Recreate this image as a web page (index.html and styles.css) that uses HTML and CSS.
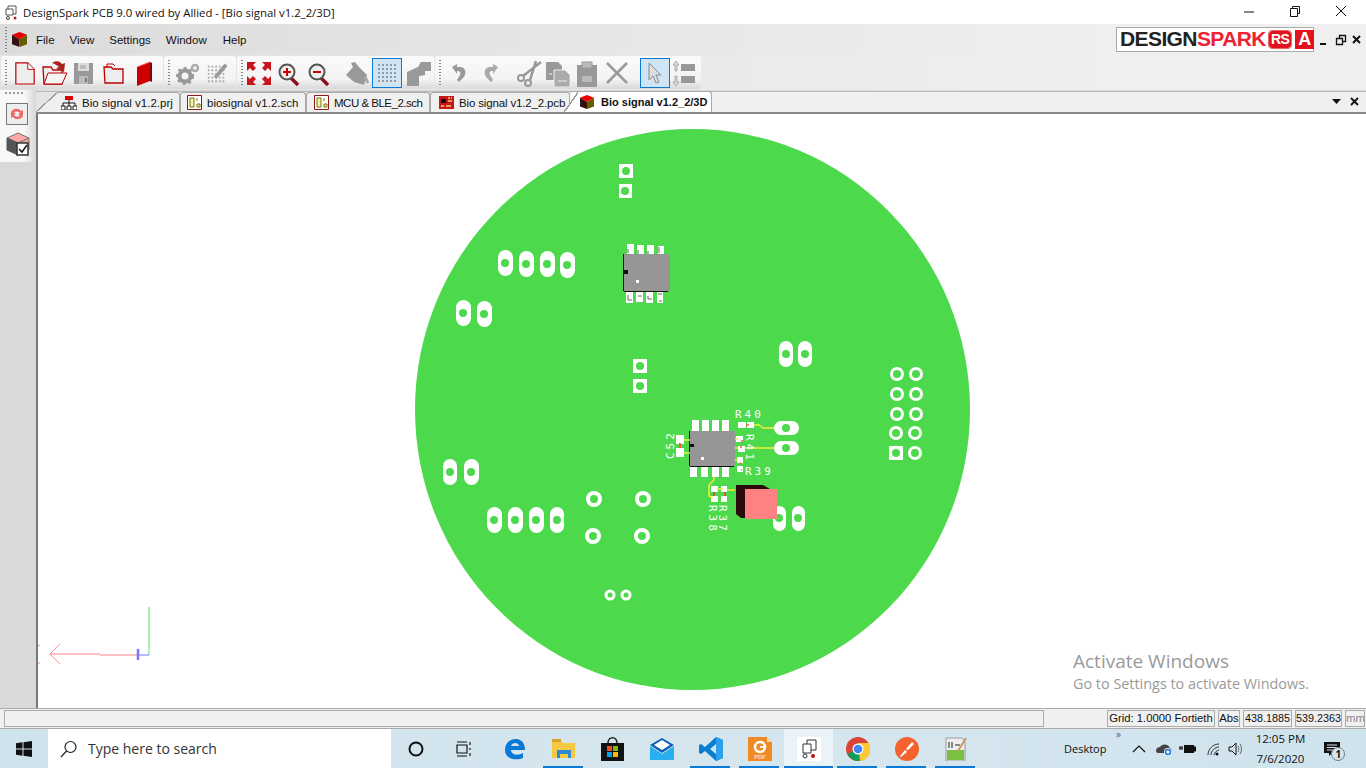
FILE: index.html
```html
<!DOCTYPE html>
<html lang="en">
<head>
  <meta charset="UTF-8">
  <title>DesignSpark PCB 9.0</title>
  <link rel="stylesheet" href="styles.css">
</head>
<body>
  <div class="titlebar">
    <svg class="app-icon" width="16" height="16" viewBox="0 0 16 16"><path d="M4 2h8v8H4z" fill="#fff" stroke="#555"/><path d="M2 5h7v6H2z" fill="#fff" stroke="#555"/><circle cx="4" cy="14" r="1.500" fill="#fff" stroke="#444"/><circle cx="11" cy="14" r="1.500" fill="#b22"/></svg>
    <span class="title-text">DesignSpark PCB 9.0 wired by Allied - [Bio signal v1.2_2/3D]</span>
    <div class="win-buttons">
      <svg width="46" height="22" viewBox="0 0 46 22"><path d="M18 11h10" stroke="#111"/></svg>
      <svg width="46" height="22" viewBox="0 0 46 22"><path d="M18.500 7.500h7v8h-7zM20.500 7.500v-2h7v7h-2" fill="none" stroke="#111"/></svg>
      <svg width="46" height="22" viewBox="0 0 46 22"><path d="M18 5l10 10M28 5L18 15" stroke="#111"/></svg>
    </div>
  </div>

  <div class="menubar">
    <span class="grip"></span>
    <svg class="cube" width="17" height="15" viewBox="0 0 18 16"><path d="M9 0l8 3-8 5-8-5z" fill="#e00"/><path d="M1 3l8 5v8l-8-3z" fill="#311"/><path d="M17 3L9 8v8l8-3z" fill="#665c00"/></svg>
    <span class="menu-item m-file">File</span>
    <span class="menu-item m-view">View</span>
    <span class="menu-item m-settings">Settings</span>
    <span class="menu-item m-window">Window</span>
    <span class="menu-item m-help">Help</span>
    <div class="logo-box">
      <span class="logo-black">DESIGN</span><span class="logo-red">SPARK</span><span class="logo-rs">RS</span><span class="logo-a">A</span>
    </div>
    <div class="mdi-buttons">
      <svg width="12" height="12" viewBox="0 0 12 12"><path d="M1 9h6v2H1z" fill="#111"/></svg>
      <svg width="12" height="12" viewBox="0 0 12 12"><path d="M1.500 4.500h6v6h-6zM4.500 4V1.500h6v6H8" fill="none" stroke="#111" stroke-width="1.300"/></svg>
      <svg width="12" height="12" viewBox="0 0 12 12"><path d="M2 2l7 7M9 2L2 9" stroke="#111" stroke-width="2"/></svg>
    </div>
  </div>

  <div class="toolrow">
    <div class="toolbar tb-file">
      <span class="grip"></span>
      <svg class="gap1" width="22" height="28" viewBox="0 0 24 28"><path d="M2 3h13l7 7v16H2z" fill="#eee" stroke="#b00" stroke-width="1.300"/><path d="M15 3v7h7" fill="#fff" stroke="#b00"/></svg>
      <svg class="gap6" width="26" height="28" viewBox="0 0 26 28"><path d="M2 25L1 8h8l2 3h9v14z" fill="#eee" stroke="#b00" stroke-width="1.300"/><path d="M2 25l4-11h19l-5 11z" fill="#f4f4f4" stroke="#b00"/><path d="M10 4c4-3 8-2 10 1l3-1-1 9-8-4 3-1c-2-2-4-3-7-4z" fill="#a22"/></svg>
      <svg class="gap5" width="22" height="28" viewBox="0 0 22 28"><path d="M1 4h19v21H1z" fill="#999"/><path d="M5 4h11v8H5z" fill="#ddd"/><path d="M7 7h6M7 9h6" stroke="#999"/><path d="M6 17h9v8H6z" fill="#bbb"/><path d="M12 19h2v4h-2z" fill="#777"/></svg>
      <svg class="gap8" width="22" height="28" viewBox="0 0 22 28"><path d="M2 24L1 8h7l2 2h10v14z" fill="#eee" stroke="#b00" stroke-width="1.300"/><path d="M4 9V5h6l2 2" fill="none" stroke="#b00"/></svg>
      <svg class="gap10" width="20" height="28" viewBox="0 0 20 28"><path d="M2 8l13-5v19L2 27z" fill="#c00"/><path d="M15 3l2 1v19l-2-1z" fill="#800"/><path d="M2 8l13-5" stroke="#e66"/></svg>
    </div>
    <div class="toolbar tb-gear">
      <span class="grip"></span>
      <svg width="24" height="28" viewBox="0 0 24 28"><circle cx="9" cy="17" r="5.500" fill="none" stroke="#999" stroke-width="4"/><circle cx="9" cy="17" r="8" fill="none" stroke="#999" stroke-width="2" stroke-dasharray="3 3"/><circle cx="19" cy="9" r="3" fill="none" stroke="#aaa" stroke-width="2.500"/></svg>
      <svg class="gap6" width="22" height="28" viewBox="0 0 24 28"><path d="M2 7h20M2 11h20M2 15h20M2 19h20M2 23h20" stroke="#aaa" stroke-width="2" stroke-dasharray="2 2"/><path d="M10 19L22 5" stroke="#999" stroke-width="4"/></svg>
    </div>
    <div class="toolbar tb-view">
      <span class="grip"></span>
      <svg width="24" height="28" viewBox="0 0 24 28"><path d="M0 3h9L6 6l3 3-3 3-3-3-3 3zM24 3h-9l3 3-3 3 3 3 3-3 3 3zM0 26h9l-3-3 3-3-3-3-3 3-3-3zM24 26h-9l3-3-3-3 3-3 3 3 3-3z" fill="#c8141c"/></svg>
      <svg class="gap6" width="24" height="28" viewBox="0 0 24 28"><path d="M14 19l7 7" stroke="#8a1020" stroke-width="3.500"/><circle cx="10" cy="13" r="7.500" fill="#eee" stroke="#555" stroke-width="2"/><path d="M6 13h8M10 9v8" stroke="#c00" stroke-width="2"/></svg>
      <svg class="gap6" width="24" height="28" viewBox="0 0 24 28"><path d="M14 19l7 7" stroke="#8a1020" stroke-width="3.500"/><circle cx="10" cy="13" r="7.500" fill="#eee" stroke="#555" stroke-width="2"/><path d="M6 13h8" stroke="#c00" stroke-width="2"/></svg>
      <svg class="gap14" width="26" height="28" viewBox="0 0 26 28"><path d="M8 8l-2-4 4-1 3 4 9 9-3 10-10-3-8-7z" fill="#999"/><path d="M20 18l3 6" stroke="#aaa" stroke-width="3"/></svg>
      <span class="tool-on tool-grid">
        <svg width="22" height="22" viewBox="0 0 22 22"><path d="M2 3h19M2 7h19M2 11h19M2 15h19M2 19h19" stroke="#999" stroke-width="2" stroke-dasharray="2 2"/></svg>
      </span>
      <svg class="gap4" width="26" height="28" viewBox="0 0 26 28"><path d="M1 13l11-5 3-5h10v9h-6v4l-6 1v10H1z" fill="#999"/></svg>
    </div>
    <div class="toolbar tb-edit">
      <span class="grip"></span>
      <svg class="gap2" width="22" height="28" viewBox="0 0 22 28"><path d="M3 8l5-3v3h3c6 0 7 7 3 11l-4 4-2-2 3-5c1-2 0-4-2-4H8v3z" fill="#999"/></svg>
      <svg class="gap9" width="20" height="28" viewBox="0 0 20 28"><path d="M18 8l-5-3v3h-3c-6 0-7 7-3 11l4 4 2-2-3-5c-1-2 0-4 2-4h1v3z" fill="#aaa"/></svg>
      <svg class="gap17" width="26" height="28" viewBox="0 0 26 28"><path d="M6 17L24 3M13 21L19 2" stroke="#999" stroke-width="2.500"/><circle cx="4" cy="19" r="3" fill="none" stroke="#999" stroke-width="2"/><circle cx="11" cy="24" r="3" fill="none" stroke="#999" stroke-width="2"/></svg>
      <svg class="gap2" width="26" height="28" viewBox="0 0 26 28"><path d="M1 3h12l4 4v14H1z" fill="#999"/><path d="M9 11h11l5 5v12H9z" fill="#aaa" stroke="#eee"/><path d="M4 15h3M13 22h9" stroke="#eee"/></svg>
      <svg class="gap4" width="24" height="28" viewBox="0 0 24 28"><path d="M2 6h20v22H2z" fill="#999"/><path d="M7 3h10v6H7z" fill="#bbb" stroke="#999"/><path d="M7 17h10v6H7z" fill="#bbb"/></svg>
      <svg class="gap6" width="24" height="28" viewBox="0 0 24 28"><path d="M2 4l20 20M22 4L2 24" stroke="#999" stroke-width="2.500"/></svg>
      <span class="tool-on tool-cursor">
        <svg width="18" height="24" viewBox="0 0 18 24"><path d="M3 2l12 12H10l3 7-3 1-3-7-4 4z" fill="#ddd" stroke="#888"/></svg>
      </span>
      <svg class="gap2" width="24" height="28" viewBox="0 0 24 28"><path d="M4 2l3 4H5v6H3V6H1zM4 27l3-4H5v-6H3v6H1z" fill="#ddd" stroke="#888" stroke-width=".6"/><path d="M9 5h14v7H9zM9 17h14v7H9z" fill="#999"/></svg>
    </div>
  </div>

  <div class="workspace">
    <div class="side-dock">
      <span class="side-grip"></span>
      <span class="side-btn"><svg width="18" height="18" viewBox="0 0 18 18"><path d="M3 8c0-4 7-6 10-2l2-1v5h-5l2-2c-2-2-5-2-6 0z" fill="#f06a6a"/><path d="M15 10c0 4-7 6-10 2l-2 1V8h5l-2 2c2 2 5 2 6 0z" fill="#f06a6a"/></svg></span>
      <svg class="side-cube" width="24" height="24" viewBox="0 0 24 24"><path d="M12 1l11 5-11 5L1 6z" fill="#ffa8a8" stroke="#777"/><path d="M1 6l11 5v12L1 18z" fill="#555" stroke="#555"/><path d="M23 6l-11 5v12l11-5z" fill="#f4a0a0" stroke="#777"/><path d="M11 11h11v12H11z" fill="#fff" stroke="#333" stroke-width="1.500"/><path d="M13 17l3 3 5-7" fill="none" stroke="#111" stroke-width="1.500"/></svg>
    </div>
    <div class="doc-area">
      <div class="tabs">
        <div class="tab tab-prj"><span class="slant slant-first"></span><svg width="16" height="14" viewBox="0 0 16 14"><path d="M4 0h8v4H4z" fill="#d00"/><path d="M8 4v3M2 10V7h12v3M8 7v3M0 10h4v4H0zM6 10h4v4H6zM12 10h4v4h-4z" fill="#fff" stroke="#111"/></svg>Bio signal v1.2.prj</div>
        <div class="tab tab-sch"><svg width="15" height="15" viewBox="0 0 15 15"><path d="M.5.500h14v14H.500z" fill="#fff" stroke="#8c1a1a"/><path d="M3 3h4v9H3zM10 3v3M10 9h3v3h-3z" fill="#f4eeb0" stroke="#7a7400"/></svg>biosignal v1.2.sch</div>
        <div class="tab tab-mcu"><svg width="15" height="15" viewBox="0 0 15 15"><path d="M.5.500h14v14H.500z" fill="#fff" stroke="#8c1a1a"/><path d="M3 3h4v9H3zM10 3v3M10 9h3v3h-3z" fill="#f4eeb0" stroke="#7a7400"/></svg><span class="mcu-name">MCU &amp; BLE_2.sch</span></div>
        <div class="tab tab-pcb"><svg width="15" height="13" viewBox="0 0 15 13"><path d="M0 0h15v13H0z" fill="#c8141c"/><path d="M2 3h5v4H2z" fill="#111"/><path d="M9 2h2M12 2h1M9 5h4M2 10h3M7 10h5" stroke="#f5d060" stroke-width="1.500"/></svg><span class="pcb-name">Bio signal v1.2_2.pcb</span></div>
        <div class="tab tab-3d"><span class="slant slant-active"></span><svg width="16" height="14" viewBox="0 0 18 16"><path d="M9 0l8 3-8 5-8-5z" fill="#e00"/><path d="M1 3l8 5v8l-8-3z" fill="#311"/><path d="M17 3L9 8v8l8-3z" fill="#665c00"/></svg>Bio signal v1.2_2/3D</div>
        <div class="tab-tools">
          <svg width="12" height="12" viewBox="0 0 12 12"><path d="M1 3h9L5.500 8z" fill="#111"/></svg>
          <svg width="12" height="12" viewBox="0 0 12 12"><path d="M2 2l7 7M9 2L2 9" stroke="#111" stroke-width="1.800"/></svg>
        </div>
      </div>
      <div class="canvas">
        <svg class="board" viewBox="38 114 1329 592" preserveAspectRatio="xMinYMin slice">
          <ellipse cx="692.500" cy="409.500" rx="277.500" ry="280.500" fill="#4cd94c"/>

          <g fill="#fff" class="pills">
            <rect x="498" y="250" width="15" height="26" rx="7.500"/><rect x="519" y="251" width="15" height="26" rx="7.500"/><rect x="540" y="251" width="15" height="26" rx="7.500"/><rect x="560" y="252" width="15" height="26" rx="7.500"/>
            <rect x="456" y="300" width="15" height="26" rx="7.500"/><rect x="477" y="301" width="15" height="26" rx="7.500"/>
            <rect x="779" y="341" width="14" height="26" rx="7"/><rect x="798" y="341" width="14" height="26" rx="7"/>
            <rect x="443" y="459" width="14" height="26" rx="7"/><rect x="464" y="459" width="15" height="26" rx="7.500"/>
            <rect x="487" y="507" width="15" height="26" rx="7.500"/><rect x="508" y="507" width="15" height="26" rx="7.500"/><rect x="529" y="507" width="15" height="26" rx="7.500"/><rect x="550" y="507" width="14" height="26" rx="7"/>
            <rect x="773" y="506" width="13" height="25" rx="6.500"/><rect x="792" y="506" width="13" height="25" rx="6.500"/>
            <rect x="774" y="421" width="25" height="14" rx="7"/><rect x="774" y="441" width="25" height="14" rx="7"/>
            <rect x="619" y="164" width="14" height="14"/><rect x="619" y="184" width="13" height="14"/><rect x="633" y="359" width="14" height="14"/><rect x="633" y="379" width="14" height="14"/><rect x="889" y="446" width="14" height="14"/>
            <circle cx="897" cy="374" r="7"/><circle cx="916" cy="374" r="7"/><circle cx="897" cy="394" r="7"/><circle cx="916" cy="394" r="7"/><circle cx="897" cy="414" r="7"/><circle cx="916" cy="414" r="7"/><circle cx="896" cy="433" r="7"/><circle cx="915" cy="433" r="7"/><circle cx="915" cy="453" r="7"/>
            <circle cx="594" cy="499" r="8"/><circle cx="643" cy="499" r="8"/><circle cx="593" cy="536" r="8"/><circle cx="642" cy="536" r="8"/><circle cx="610" cy="595" r="5.500"/><circle cx="626" cy="595" r="5.500"/>
          </g>
          <g fill="#4cd94c">
            <circle cx="505" cy="263" r="4"/><circle cx="526" cy="264" r="4"/><circle cx="547" cy="264" r="4"/><circle cx="567" cy="265" r="4"/>
            <circle cx="463" cy="313" r="4"/><circle cx="484" cy="314" r="4"/><circle cx="786" cy="354" r="4"/><circle cx="805" cy="354" r="4"/>
            <circle cx="450" cy="472" r="4"/><circle cx="471" cy="472" r="4"/><circle cx="494" cy="520" r="4"/><circle cx="515" cy="520" r="4"/><circle cx="536" cy="520" r="4"/><circle cx="557" cy="520" r="4"/>
            <circle cx="779" cy="518" r="4"/><circle cx="798" cy="518" r="4"/><circle cx="786" cy="428" r="4"/><circle cx="786" cy="448" r="4"/>
            <circle cx="626" cy="171" r="4"/><circle cx="625" cy="191" r="4"/><circle cx="640" cy="366" r="4"/><circle cx="640" cy="386" r="4"/><circle cx="896" cy="453" r="4"/>
            <circle cx="897" cy="374" r="4"/><circle cx="916" cy="374" r="4"/><circle cx="897" cy="394" r="4"/><circle cx="916" cy="394" r="4"/><circle cx="897" cy="414" r="4"/><circle cx="916" cy="414" r="4"/><circle cx="896" cy="433" r="4"/><circle cx="915" cy="433" r="4"/><circle cx="915" cy="453" r="4"/>
            <circle cx="594" cy="499" r="4"/><circle cx="643" cy="499" r="4"/><circle cx="593" cy="536" r="4"/><circle cx="642" cy="536" r="4"/><circle cx="610" cy="595" r="2.500"/><circle cx="626" cy="595" r="2.500"/>
          </g>

          <!-- top chip -->
          <g fill="#fff">
            <rect x="627" y="244" width="7" height="10"/><rect x="637" y="245" width="7" height="9"/><rect x="647" y="245" width="7" height="9"/><rect x="658" y="246" width="6" height="8"/>
            <rect x="626" y="290" width="7" height="13"/><rect x="636" y="290" width="7" height="12"/><rect x="646" y="290" width="7" height="13"/><rect x="657" y="290" width="6" height="13"/>
          </g>
          <path d="M628 249v4M638 250v4M648 251v3M659 247v6M628 295v5h4M638 296h4M648 296v3h4M658 294h4M659 301h3" stroke="#666" fill="none"/>
          <path d="M623 254h1v37h-1zM624 291h44v1h-44z" fill="#111"/>
          <rect x="624" y="254" width="46" height="37" fill="#969696"/>
          <rect x="624" y="270" width="4" height="4" fill="#111"/>
          <rect x="636" y="280" width="3" height="3" fill="#fff"/>

          <!-- lower chip -->
          <g fill="#fff">
            <rect x="692" y="420" width="7" height="11"/><rect x="702" y="420" width="7" height="11"/><rect x="712" y="420" width="7" height="11"/><rect x="722" y="420" width="7" height="11"/>
            <rect x="690" y="467" width="7" height="10"/><rect x="701" y="467" width="7" height="10"/><rect x="712" y="467" width="7" height="10"/><rect x="722" y="467" width="7" height="10"/>
            <rect x="676" y="435" width="8" height="9"/><rect x="676" y="448" width="8" height="9"/>
            <rect x="738" y="422" width="8" height="6"/><rect x="747" y="422" width="7" height="6"/>
            <rect x="736" y="436" width="7" height="6"/><rect x="738" y="446" width="7" height="6"/><rect x="737" y="457" width="6" height="6"/><rect x="737" y="466" width="6" height="6"/>
            <rect x="711" y="486" width="7" height="6"/><rect x="721" y="486" width="6" height="6"/><rect x="711" y="496" width="7" height="6"/><rect x="721" y="496" width="6" height="6"/>
          </g>
          <path d="M689 431h1v35h-1zM690 466h44v1h-44z" fill="#111"/>
          <rect x="690" y="431" width="45" height="35" fill="#969696"/>
          <path d="M689 447h5v-3h-5z" fill="#111"/>
          <rect x="701" y="457" width="3" height="3" fill="#fff"/>
          <path d="M680 443v5" stroke="#f55" stroke-width="2"/>
          <path d="M746 425h3M741 441h2M740 447h2M740 463h1M741 470h1" stroke="#f55" stroke-width="1.500" fill="none"/>
          <path d="M754 425h5l4 3h11M745 448h29M684 440h6M684 453h6M735 439h3M735 448h3M735 460h3" stroke="#f0ee3c" stroke-width="1.500" fill="none"/>
          <path d="M714 477v3l-5 5v11l4 2M717 489h6M727 490h8" stroke="#f0ee3c" stroke-width="1.500" fill="none"/>
          <path d="M714 492v4M725 492v4" stroke="#e33" stroke-width="1.500"/>

          <!-- switch -->
          <path d="M736 485h27l7 4v29h-29l-5-4z" fill="#2a0a0a"/>
          <rect x="745" y="489" width="32" height="30" fill="#ff8282"/>

          <g class="silk">
            <text x="735" y="418">R40</text>
            <text x="745" y="475">R39</text>
            <text transform="translate(674 459) rotate(-90)">C52</text>
            <text transform="translate(746 434) rotate(90)">R41</text>
            <text transform="translate(709 505) rotate(90)">R38</text>
            <text transform="translate(719 505) rotate(90)">R37</text>
          </g>

          <!-- axis widget -->
          <path d="M149 607v48" stroke="#7be87b" stroke-width="1.200"/>
          <path d="M100 655h37M50 654h50" stroke="#f88" stroke-width="1.200"/>
          <path d="M60 644l-10 10 10 10" stroke="#f88" fill="none"/>
          <path d="M38 646l2-1M38 663h2" stroke="#f88"/>
          <path d="M137 655h12" stroke="#88f" stroke-width="1.200"/>
          <path d="M138 649v11" stroke="#77f" stroke-width="2.500"/>
        </svg>
        <div class="watermark">
          <div class="wm-title">Activate Windows</div>
          <div class="wm-sub">Go to Settings to activate Windows.</div>
        </div>
      </div>
    </div>
  </div>

  <div class="statusbar">
    <span class="status-empty"></span>
    <span class="status-cell cell-grid">Grid: 1.0000 Fortieth</span>
    <span class="status-cell cell-abs">Abs</span>
    <span class="status-cell cell-x">438.1885</span>
    <span class="status-cell cell-y">539.2363</span>
    <span class="status-cell cell-mm">mm</span>
  </div>

  <div class="taskbar">
    <svg class="win-logo" width="16" height="16" viewBox="0 0 16 16"><path d="M0 2.200l6.500-.9v6.200H0zM7.500 1.200L16 0v7.500H7.500zM0 8.500h6.500v6.200L0 13.800zM7.500 8.500H16V16l-8.500-1.200z" fill="#111"/></svg>
    <div class="searchbox">
      <svg width="18" height="18" viewBox="0 0 18 18"><circle cx="10.500" cy="7" r="5.500" fill="none" stroke="#222" stroke-width="1.200"/><path d="M6.500 11L1 17" stroke="#222" stroke-width="1.200"/></svg>
      <span>Type here to search</span>
    </div>
    <svg class="tb-circle" width="16" height="16" viewBox="0 0 16 16"><circle cx="8" cy="8" r="6.500" fill="none" stroke="#111" stroke-width="2"/></svg>
    <svg class="tb-tasks" width="18" height="16" viewBox="0 0 18 16"><path d="M1 4h10v8H1zM1 1h10M1 15h10M14 1v3M14 7v2M14 12v3" fill="none" stroke="#111" stroke-width="1.200"/></svg>

    <div class="task-app app-edge"><svg width="22" height="22" viewBox="0 0 22 22"><path d="M1 12C1 5 6 1 12 1c6 0 9 5 9 11H7c0 5 7 6 12 3v5c-7 3-18 1-18-8zM7 8h8c0-4-7-4-8 0z" fill="#0a78d7"/></svg></div>
    <div class="task-app app-folder running"><svg width="24" height="20" viewBox="0 0 24 20"><path d="M0 2h9l2 2h12v15H0z" fill="#f6c945"/><path d="M0 0h9v3H0z" fill="#d9a227"/><path d="M5 11h14v8h-3v-4H8v4H5z" fill="#2a8ad4"/></svg></div>
    <div class="task-app app-store"><svg width="24" height="24" viewBox="0 0 24 24"><path d="M0 6h23v18H0z" fill="#111"/><path d="M7 6c0-7 9-7 9 0" fill="none" stroke="#222" stroke-width="1.500"/><path d="M6 9h5v5H6z" fill="#f25022"/><path d="M12 9h5v5h-5z" fill="#7fba00"/><path d="M6 15h5v5H6z" fill="#00a4ef"/><path d="M12 15h5v5h-5z" fill="#ffb900"/></svg></div>
    <div class="task-app app-mail"><svg width="24" height="22" viewBox="0 0 24 22"><path d="M0 7L12 0l12 7-12 8z" fill="#0a5fb4"/><path d="M4 7l8-5 8 5-8 5z" fill="#fff"/><path d="M0 8l12 8 12-8v14H0z" fill="#28b0ee"/></svg></div>
    <div class="task-app app-code running"><svg width="24" height="24" viewBox="0 0 24 24"><path d="M17 0l7 3v18l-7 3-11-10-4 3-2-1V8l2-1 4 3zm0 7l-6 5 6 5z" fill="#0a7fd0"/><path d="M17 0l7 3v18l-7 3z" fill="#2aa0ee"/></svg></div>
    <div class="task-app app-foxit running"><svg width="24" height="24" viewBox="0 0 24 24"><path d="M0 0h19l5 5v19H0z" fill="#f08a24"/><path d="M19 0l5 5h-5z" fill="#fcd9b0"/><circle cx="12" cy="10" r="5" fill="none" stroke="#fff" stroke-width="2.500"/><path d="M12 10h5" stroke="#fff" stroke-width="2"/><text class="pdf-label" x="12" y="22">PDF</text></svg></div>
    <div class="task-app app-ds running active"><span class="ds-tile"><svg width="20" height="20" viewBox="0 0 20 20"><path d="M8 1h9v10H8z" fill="#fff" stroke="#333"/><path d="M4 5h8v9H4z" fill="#fff" stroke="#333"/><circle cx="6" cy="17" r="2" fill="#fff" stroke="#333"/><circle cx="14" cy="17" r="2" fill="#b11"/></svg></span></div>
    <div class="task-app app-chrome running"><svg width="24" height="24" viewBox="0 0 24 24"><circle cx="12" cy="12" r="12" fill="#db4437"/><path d="M12 12L1.500 17A12 12 0 0 0 14 24z" fill="#0f9d58"/><path d="M12 6h11a12 12 0 0 1-9 18z" fill="#fcc934"/><circle cx="12" cy="12" r="5.500" fill="#fff"/><circle cx="12" cy="12" r="4.300" fill="#4285f4"/></svg></div>
    <div class="task-app app-postman running"><svg width="24" height="24" viewBox="0 0 24 24"><circle cx="12" cy="12" r="12" fill="#f4632f"/><path d="M5 19l5-6 2 2-6 5zM11 12l6-7 2 2-6 6z" fill="#fff"/></svg></div>
    <div class="task-app app-note running"><svg width="22" height="24" viewBox="0 0 22 24"><path d="M1 1h16l3 3v20H1z" fill="#eee" stroke="#999"/><path d="M2 13h17v10H2z" fill="#7ac143"/><path d="M4 5v6M7 5v6M10 8h5" stroke="#222"/><path d="M21 1l-8 13" stroke="#c96" stroke-width="2"/></svg></div>

    <span class="desktop-label">Desktop</span>
    <span class="chevrons">&raquo;</span>
    <svg class="tray-up" width="14" height="8" viewBox="0 0 14 8"><path d="M1 7l6-6 6 6" fill="none" stroke="#111" stroke-width="1.200"/></svg>
    <svg class="tray-cloud" width="18" height="14" viewBox="0 0 18 14"><path d="M1 9c0-3 2-4 4-4 1-3 8-4 10 1 2 0 2 5 0 5H3C2 11 1 10 1 9z" fill="#444"/><circle cx="13" cy="10" r="4" fill="#fff"/><circle cx="13" cy="10" r="2.500" fill="none" stroke="#0a78d7" stroke-width="1.500"/></svg>
    <svg class="tray-batt" width="17" height="12" viewBox="0 0 17 12"><path d="M5 2h10v8H5z" fill="#111"/><path d="M15 4h2v4h-2zM0 5h4M1 3v4M3 3v4" stroke="#111"/></svg>
    <svg class="tray-wifi" width="14" height="14" viewBox="0 0 14 14"><path d="M2 13C2 7 7 2 13 2M5 13c0-4 4-8 8-8M8 13c0-2 3-5 5-5" fill="none" stroke="#333"/><circle cx="11" cy="12" r="1.500" fill="#111"/></svg>
    <svg class="tray-vol" width="16" height="14" viewBox="0 0 16 14"><path d="M1 5h3l4-4v12L4 9H1z" fill="none" stroke="#111"/><path d="M10 4c1 2 1 4 0 6M12 2c2 3 2 7 0 10" fill="none" stroke="#666"/></svg>
    <div class="clock"><div>12:05 PM</div><div>7/6/2020</div></div>
    <div class="notif">
      <svg width="16" height="14" viewBox="0 0 16 14"><path d="M0 0h16v11H8l-3 3v-3H0z" fill="#111"/><path d="M3 3h10M3 5.500h10M3 8h6" stroke="#d4e6ef"/></svg>
      <span class="notif-badge">1</span>
    </div>
  </div>
</body>
</html>
```

FILE: styles.css
```css
html, body {
  margin: 0;
  padding: 0;
}

body {
  width: 1366px;
  height: 768px;
  overflow: hidden;
  font-family: "Open Sans", "Liberation Sans", sans-serif;
  display: flex;
  flex-direction: column;
  background: #f0f0f0;
  color: #111;
}

svg {
  display: block;
  flex: none;
}

/* title bar */
.titlebar {
  height: 24px;
  background: #fff;
  display: flex;
  align-items: center;
  padding-left: 4px;
  flex: none;
}

.title-text {
  font-size: 11.350px;
  margin-left: 3px;
  white-space: nowrap;
}

.win-buttons {
  margin-left: auto;
  display: flex;
  margin-right: 2px;
}

/* menu */
.menubar {
  height: 31px;
  background: linear-gradient(to right, #dcdcdc, #efefef 80%);
  display: flex;
  align-items: center;
  position: relative;
  flex: none;
}

.grip {
  display: block;
  width: 2px;
  height: 26px;
  flex: none;
  background: repeating-linear-gradient(to bottom, #888 0, #888 1px, transparent 1px, transparent 3px);
}

.menubar .grip {
  margin-left: 5px;
}

.cube {
  margin-left: 4px;
}

.menu-item {
  font-family: "Liberation Sans", sans-serif;
  font-size: 11.500px;
}

.m-file { margin-left: 8px; }
.m-view { margin-left: 15px; }
.m-settings { margin-left: 15px; }
.m-window { margin-left: 15px; }
.m-help { margin-left: 16px; }

.logo-box {
  margin-left: auto;
  width: 198px;
  height: 25px;
  background: #fff;
  border: 1px solid #aaa;
  box-sizing: border-box;
  display: flex;
  align-items: center;
  padding-left: 3px;
  font-family: "Liberation Sans", sans-serif;
  font-weight: bold;
  font-size: 21px;
  letter-spacing: -0.6px;
  margin-bottom: 1px;
}

.logo-black { color: #222; }
.logo-red { color: #ee2231; }

.logo-rs {
  color: #fff;
  background: #e1141e;
  border: 1px solid #e1141e;
  outline: 1px solid #e66;
  font-size: 14px;
  line-height: 15px;
  margin-left: 3px;
  padding: 0 1px;
  border-radius: 3px;
}

.logo-a {
  color: #fff;
  background: #e1141e;
  font-size: 18px;
  line-height: 19px;
  margin-left: 4px;
  padding: 0 3px;
}

.mdi-buttons {
  display: flex;
  gap: 4px;
  margin: 0 3px 0 5px;
}

/* toolbars */
.toolrow {
  height: 35px;
  background: linear-gradient(to right, #e2e2e2, #efefef 80%);
  display: flex;
  align-items: center;
  flex: none;
}

.toolbar {
  height: 33px;
  background: linear-gradient(to bottom, #fafafa, #f4f4f4 70%, #d9d9d9);
  display: flex;
  align-items: center;
  border-radius: 3px;
  box-sizing: border-box;
  padding-left: 4px;
}

.toolbar .grip {
  margin-right: 6px;
}

.tb-view .grip {
  margin-right: 4px;
}

.tb-file { width: 162px; margin-left: 1px; }
.tb-gear { width: 72px; margin-left: 1px; }
.tb-view { width: 197px; margin-left: 1px; }
.tb-edit { width: 266px; margin-left: 1px; }

.gap1 { margin-left: 1px; }
.gap2 { margin-left: 2px; }
.gap4 { margin-left: 4px; }
.gap5 { margin-left: 5px; }
.gap6 { margin-left: 6px; }
.gap8 { margin-left: 8px; }
.gap9 { margin-left: 9px; }
.gap10 { margin-left: 10px; }
.gap14 { margin-left: 14px; }
.gap17 { margin-left: 17px; }

.tool-on {
  width: 30px;
  height: 30px;
  box-sizing: border-box;
  border: 1px solid #0a7ad6;
  background: #cfe4f5;
  display: flex;
  align-items: center;
  justify-content: center;
  flex: none;
}

.tool-grid { margin-left: 1px; }
.tool-cursor { margin-left: 11px; }

/* main */
.workspace {
  flex: 1;
  display: flex;
  min-height: 0;
  background: #d9d9d9;
}

.side-dock {
  width: 34px;
  flex: none;
  display: flex;
  flex-direction: column;
  align-items: flex-start;
  background: linear-gradient(to right, #f8f8f8 0, #f8f8f8 24px, #dcdcdc 34px);
  height: 72px;
}

.side-grip {
  width: 20px;
  height: 2px;
  margin: 2px 0 0 5px;
  background: repeating-linear-gradient(to right, #999 0, #999 2px, transparent 2px, transparent 4px);
}

.side-btn {
  width: 22px;
  height: 22px;
  box-sizing: border-box;
  border: 1px solid #777;
  margin: 9px 0 0 6px;
  display: flex;
  align-items: center;
  justify-content: center;
  background: #eee;
}

.side-cube {
  margin: 7px 0 0 6px;
}

.doc-area {
  flex: 1;
  display: flex;
  flex-direction: column;
  min-width: 0;
  margin-left: 2px;
}

.tabs {
  height: 23px;
  background: #f0f0f0;
  border-bottom: 2px solid #888;
  display: flex;
  align-items: flex-end;
  flex: none;
  box-sizing: border-box;
  font-family: "Liberation Sans", sans-serif;
  font-size: 11.500px;
  border-top: 1px solid #bbb;
  margin-top: 1px;
}

.tab {
  height: 20px;
  display: flex;
  align-items: center;
  gap: 5px;
  border: 1px solid #aaa;
  border-bottom: 0;
  background: #f0f0f0;
  box-sizing: border-box;
  border-radius: 3px 3px 0 0;
  white-space: nowrap;
  position: relative;
}

.tab-prj { width: 144px; padding-left: 25px; border-left: 0; }
.tab-sch { width: 126px; padding-left: 6px; }
.tab-mcu { width: 124px; padding-left: 7px; }
.tab-pcb { width: 140px; padding-left: 8px; }
.tab-3d {
  width: 142px;
  padding-left: 9px;
  gap: 6px;
  background: #fff;
  font-weight: bold;
  font-size: 11px;
  height: 21px;
  border-left: 0;
}

.mcu-name {
  letter-spacing: -0.5px;
}

.pcb-name {
  letter-spacing: -0.15px;
}

.slant {
  position: absolute;
  bottom: 0;
  height: 20px;
}

.slant-first {
  left: 0;
  width: 22px;
  background: linear-gradient(to bottom right, #e4e4e4 48%, #999 48%, #999 52%, #f0f0f0 52%);
}

.slant-active {
  left: -6px;
  width: 14px;
  background: linear-gradient(to bottom right, transparent 48%, #999 48%, #999 54%, #fff 54%);
}

.tab-tools {
  margin-left: auto;
  display: flex;
  gap: 6px;
  padding-right: 5px;
  align-self: center;
}

.canvas {
  flex: 1;
  background: #fff;
  position: relative;
  border-left: 2px solid #777;
  overflow: hidden;
  min-height: 0;
}

.board {
  position: absolute;
  left: 0;
  top: 0;
  width: 1329px;
  height: 592px;
}

.silk text {
  fill: #fff;
  font-family: "DejaVu Sans Mono", monospace;
  font-size: 11px;
  letter-spacing: 3px;
}

.watermark {
  position: absolute;
  left: 1035px;
  top: 535px;
  color: #9a9a9a;
  font-family: "Open Sans", sans-serif;
  white-space: nowrap;
}

.wm-title {
  font-size: 19px;
  line-height: 25px;
}

.wm-sub {
  font-size: 14.400px;
  line-height: 20px;
}

/* status */
.statusbar {
  height: 20px;
  background: #f0f0f0;
  display: flex;
  align-items: center;
  gap: 3px;
  padding: 0 1px 0 4px;
  font-family: "Liberation Sans", sans-serif;
  font-size: 11.300px;
  flex: none;
  border-top: 1px solid #aaa;
  box-sizing: border-box;
}

.status-empty {
  width: 1040px;
  height: 17px;
  box-sizing: border-box;
  border: 1px solid #aaa;
  margin-right: 60px;
}

.status-cell {
  border: 1px solid #aaa;
  height: 17px;
  line-height: 15px;
  box-sizing: border-box;
  text-align: center;
  white-space: nowrap;
  overflow: hidden;
}

.cell-grid { width: 108px; }
.cell-abs { width: 22px; }
.cell-x { width: 49px; font-size: 10.800px; }
.cell-y { width: 47px; font-size: 10.800px; }
.cell-mm { width: 20px; color: #888; }

/* taskbar */
.taskbar {
  height: 40px;
  background: linear-gradient(to right, #cfe3ec, #d6e6ef 60%, #cfe3ec);
  display: flex;
  align-items: center;
  position: relative;
  flex: none;
  border-top: 1px solid #aaa;
  box-sizing: border-box;
}

.win-logo { margin-left: 16px; }

.searchbox {
  width: 343px;
  height: 39px;
  background: #fff;
  margin-left: 16px;
  display: flex;
  align-items: center;
  padding-left: 12px;
  gap: 10px;
  box-sizing: border-box;
  font-family: "Open Sans", sans-serif;
  font-size: 14px;
  color: #333;
}

.tb-circle { margin-left: 17px; }
.tb-tasks { margin-left: 32px; }

.task-app {
  width: 49px;
  height: 39px;
  display: flex;
  align-items: center;
  justify-content: center;
  position: relative;
  flex: none;
  box-sizing: border-box;
}

.running::after {
  content: "";
  position: absolute;
  left: 4px;
  right: 5px;
  bottom: 0;
  height: 2px;
  background: #0a78d7;
}

.app-edge { margin-left: 16px; }

.active { background: #eaf3f8; }
.active::after { left: 0; right: 0; }

.pdf-label {
  font-family: "Liberation Sans", sans-serif;
  font-size: 6px;
  font-weight: bold;
  fill: #fbdcbc;
  text-anchor: middle;
}

.ds-tile {
  width: 24px;
  height: 24px;
  background: #fff;
  display: flex;
  align-items: center;
  justify-content: center;
}

.desktop-label {
  font-size: 11px;
  margin-left: 84px;
  font-family: "Open Sans", sans-serif;
}

.chevrons {
  position: absolute;
  left: 1116px;
  top: -2px;
  font-size: 10px;
  color: #55a;
}

.tray-up { margin-left: 26px; }
.tray-cloud { margin-left: 9px; }
.tray-batt { margin-left: 6px; }
.tray-wifi { margin-left: 10px; }
.tray-vol { margin-left: 8px; }

.clock {
  font-family: "Open Sans", sans-serif;
  font-size: 11.500px;
  line-height: 20px;
  text-align: center;
  margin-left: 3px;
  width: 66px;
}

.notif {
  position: relative;
  margin-left: 11px;
}

.notif-badge {
  position: absolute;
  left: 7px;
  top: 5px;
  width: 14px;
  height: 14px;
  border-radius: 50%;
  border: 1px solid #777;
  background: #d4e6ef;
  font-size: 10px;
  font-weight: bold;
  text-align: center;
  box-sizing: border-box;
  line-height: 12px;
}
```
